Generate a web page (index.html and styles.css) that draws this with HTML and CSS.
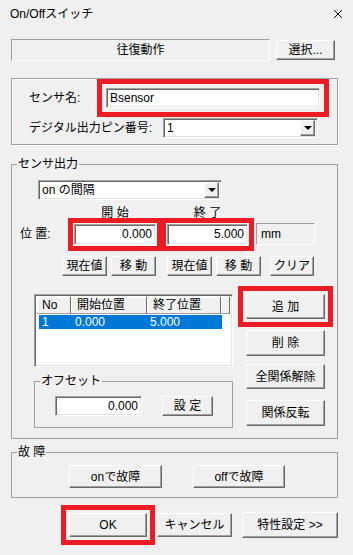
FILE: index.html
```html
<!DOCTYPE html>
<html>
<head>
    <title>On/Offスイッチ</title>
    <link rel="stylesheet" href="styles.css">
</head>
<body>
    <div class="titlebar">
        <span class="title">On/Offスイッチ</span>
        <svg class="close" width="10" height="10" viewBox="0 0 10 10">
            <path d="M1 1 L9 9 M9 1 L1 9" stroke="#000" stroke-width="1" fill="none"/>
        </svg>
    </div>

    <div class="top-row">
        <div class="static motion">往復動作</div>
        <button class="btn btn-select">選択...</button>
    </div>

    <div class="group">
        <div class="field-row">
            <span class="name-label">センサ名:</span>
            <div class="edit edit-name mark mark-name">Bsensor</div>
        </div>
        <div class="field-row">
            <span class="pin-label">デジタル出力ピン番号:</span>
            <div class="edit combo combo-pin"><span>1</span><span class="combo-btn"></span></div>
        </div>
    </div>

    <fieldset class="frame frame-output">
        <legend>センサ出力</legend>

        <div class="edit combo combo-mode"><span>on の間隔</span><span class="combo-btn"></span></div>

        <div class="caption-row">
            <span class="caption cap-start">開 始</span>
            <span class="caption cap-end">終 了</span>
        </div>

        <div class="pos-row">
            <span class="pos-label">位 置:</span>
            <div class="edit num edit-start mark mark-pos">0.000</div>
            <div class="edit num edit-end mark mark-pos">5.000</div>
            <div class="static unit">mm</div>
        </div>

        <div class="btn-row">
            <button class="btn small">現在値</button>
            <button class="btn small gap-s">移 動</button>
            <button class="btn small gap-l">現在値</button>
            <button class="btn small gap-s">移 動</button>
            <button class="btn clear">クリア</button>
        </div>

        <div class="mid-row">
            <div class="left-col">
                <div class="list">
                    <div class="list-head">
                        <span class="col col-no">No</span>
                        <span class="col col-start">開始位置</span>
                        <span class="col col-end">終了位置</span>
                        <span class="col col-rest"></span>
                    </div>
                    <div class="list-row selected">
                        <span class="cell cell-no">1</span>
                        <span class="cell cell-start">0.000</span>
                        <span class="cell cell-end">5.000</span>
                    </div>
                </div>

                <fieldset class="frame frame-offset">
                    <legend>オフセット</legend>
                    <div class="offset-row">
                        <div class="edit num edit-offset">0.000</div>
                        <button class="btn btn-set">設 定</button>
                    </div>
                </fieldset>
            </div>

            <div class="right-col">
                <button class="btn side mark mark-add">追 加</button>
                <button class="btn side side-del">削 除</button>
                <button class="btn side side-all">全関係解除</button>
                <button class="btn side side-rev">関係反転</button>
            </div>
        </div>
    </fieldset>

    <fieldset class="frame frame-fault">
        <legend>故 障</legend>
        <div class="fault-row">
            <button class="btn fault fault-on">onで故障</button>
            <button class="btn fault fault-off">offで故障</button>
        </div>
    </fieldset>

    <div class="bottom-row">
        <button class="btn btn-ok mark mark-ok">OK</button>
        <button class="btn btn-cancel">キャンセル</button>
        <button class="btn btn-prop">特性設定 &gt;&gt;</button>
    </div>
</body>
</html>
```

FILE: styles.css
```css
* {
    box-sizing: border-box;
}

body {
    margin: 0;
    width: 353px;
    height: 555px;
    overflow: hidden;
    background: #f0f0f0;
    font-family: "Liberation Sans", "Noto Sans CJK JP", sans-serif;
    font-size: 12px;
    line-height: 14px;
    color: #000;
}

/* タイトルバー */
.titlebar {
    height: 28px;
    display: flex;
    align-items: center;
    justify-content: space-between;
    padding: 0 10px;
}

.close {
    display: block;
}

/* 共通パーツ */
.btn {
    font: inherit;
    color: #000;
    background: #f0f0f0;
    margin: 0;
    padding: 0;
    border: 1px solid;
    border-color: #fff #696969 #696969 #fff;
    box-shadow: inset -1px -1px #a0a0a0;
    display: flex;
    align-items: center;
    justify-content: center;
    white-space: nowrap;
}

.static {
    border: 1px solid;
    border-color: #a0a0a0 #fff #fff #a0a0a0;
    display: flex;
    align-items: center;
}

.edit {
    background: #fff;
    border: 1px solid;
    border-color: #a0a0a0 #fff #fff #a0a0a0;
    box-shadow: inset 1px 1px #696969, inset -1px -1px #e3e3e3;
    padding: 0 3px;
    display: flex;
    align-items: center;
    white-space: nowrap;
}

.num {
    justify-content: flex-end;
}

.combo {
    padding: 0 2px 0 3px;
    justify-content: space-between;
}

.combo-btn {
    width: 15px;
    height: 16px;
    background: #f0f0f0;
    border: 1px solid;
    border-color: #fff #696969 #696969 #fff;
    box-shadow: inset -1px -1px #a0a0a0;
    display: flex;
    align-items: center;
    justify-content: center;
}

.combo-btn::after {
    content: "";
    border-left: 4px solid transparent;
    border-right: 4px solid transparent;
    border-top: 4px solid #000;
}

/* 赤枠 */
.mark {
    outline: 5px solid #ed1c24;
}

.mark-name {
    outline-offset: 4px;
}

.mark-pos {
    outline-offset: 1px;
}

.mark-add,
.mark-ok {
    outline-offset: 3px;
}

/* 上段 */
.top-row {
    display: flex;
    margin: 11px 0 0 11px;
}

.motion {
    width: 259px;
    height: 22px;
    justify-content: center;
}

.btn-select {
    width: 59px;
    height: 20px;
    margin: 1px 0 0 6px;
}

/* センサ名グループ */
.group {
    margin: 17px 0 0 11px;
    width: 327px;
    height: 67px;
    border: 1px solid #a0a0a0;
    box-shadow: inset 1px 1px #fff, 1px 1px #fff;
    padding: 9px 0 0 17px;
}

.field-row {
    display: flex;
    align-items: center;
}

.field-row + .field-row {
    margin-top: 10px;
}

.name-label {
    width: 77px;
}

.edit-name {
    width: 214px;
    height: 20px;
}

.pin-label {
    width: 134px;
}

.combo-pin {
    width: 155px;
    height: 20px;
}

/* グループ枠 */
.frame {
    margin: 12px 0 0 11px;
    width: 327px;
    min-width: 0;
    padding: 0;
    border: 1px solid #a0a0a0;
}

.frame legend {
    margin-left: 5px;
    padding: 0 1px;
    line-height: 14px;
}

.frame-output {
    padding-bottom: 10px;
}

.combo-mode {
    margin: 9px 0 0 26px;
    width: 184px;
    height: 20px;
}

.caption-row {
    display: flex;
    margin: 6px 0 0 62px;
    height: 14px;
}

.caption {
    text-align: center;
}

.cap-start {
    width: 82px;
}

.cap-end {
    width: 81px;
    margin-left: 11px;
}

.pos-row {
    display: flex;
    align-items: center;
    margin: 3px 0 0 8px;
    height: 22px;
}

.pos-label {
    width: 54px;
}

.edit-start {
    width: 82px;
    height: 21px;
}

.edit-end {
    width: 81px;
    height: 21px;
    margin-left: 11px;
}

.unit {
    width: 59px;
    height: 22px;
    margin-left: 8px;
    padding-left: 4px;
}

.btn-row {
    display: flex;
    margin: 11px 0 0 50px;
}

.small {
    width: 45px;
    height: 20px;
}

.gap-s {
    margin-left: 4px;
}

.gap-l {
    margin-left: 11px;
}

.clear {
    width: 44px;
    height: 20px;
    margin-left: 9px;
}

/* リストと右側ボタン */
.mid-row {
    display: flex;
    margin: 18px 0 0 22px;
}

.left-col {
    width: 199px;
}

.list {
    height: 73px;
    background: #fff;
    border: 1px solid;
    border-color: #a0a0a0 #fff #fff #a0a0a0;
    box-shadow: inset 1px 1px #696969, inset -1px -1px #e3e3e3;
    padding: 2px 2px 0 2px;
}

.list-head {
    display: flex;
    height: 17px;
}

.col {
    background: #f0f0f0;
    border-right: 1px solid #696969;
    border-bottom: 1px solid #a0a0a0;
    box-shadow: inset 1px 1px #fff;
    padding: 1px 0 0 5px;
    white-space: nowrap;
}

.col-no {
    width: 34px;
}

.col-start {
    width: 76px;
    padding-left: 6px;
}

.col-end {
    width: 74px;
    padding-left: 6px;
}

.col-rest {
    flex: 1;
}

.list-row {
    display: flex;
    height: 14px;
    width: 183px;
    margin: 1px 0 0 2px;
}

.selected {
    background: #0078d7;
    color: #fff;
}

.cell-no {
    width: 36px;
    padding-left: 3px;
}

.cell-start {
    width: 75px;
}

.frame-offset {
    margin: 7px 0 0 0;
    width: 199px;
    padding-bottom: 11px;
}

.offset-row {
    display: flex;
    align-items: center;
    margin: 8px 0 0 20px;
}

.edit-offset {
    width: 87px;
    height: 20px;
}

.btn-set {
    width: 51px;
    height: 20px;
    margin-left: 20px;
}

.right-col {
    width: 79px;
    margin-left: 13px;
    display: flex;
    flex-direction: column;
}

.side {
    width: 79px;
    height: 25px;
}

.side-del {
    height: 26px;
    margin-top: 11px;
}

.side-all {
    margin-top: 8px;
}

.side-rev {
    height: 26px;
    margin-top: 11px;
}

/* 故障 */
.frame-fault {
    margin-top: 6px;
    padding-bottom: 9px;
}

.fault-row {
    display: flex;
    margin: 6px 0 0 57px;
}

.fault {
    height: 23px;
}

.fault-on {
    width: 93px;
}

.fault-off {
    width: 92px;
    margin-left: 31px;
}

/* 下段ボタン */
.bottom-row {
    display: flex;
    align-items: flex-start;
    margin: 15px 0 0 69px;
}

.btn-ok {
    width: 78px;
    height: 24px;
}

.btn-cancel {
    width: 75px;
    height: 24px;
    margin-left: 10px;
}

.btn-prop {
    width: 96px;
    height: 26px;
    margin: -1px 0 0 10px;
}
```
